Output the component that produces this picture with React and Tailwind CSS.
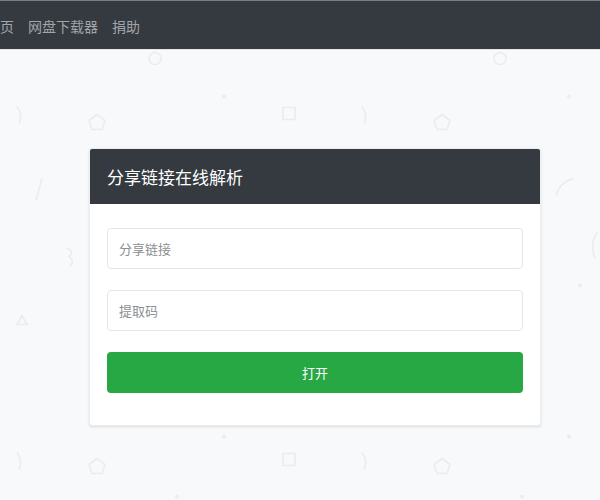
import React from 'react';

const font = { fontFamily: '"Noto Sans CJK SC", "Liberation Sans", sans-serif' };

// faint background pattern
const Pattern = () => (
  <svg className="absolute inset-0 h-full w-full" width="600" height="500" viewBox="0 0 600 500" fill="none" stroke="#eaecee" strokeWidth="1.6">
    {[0, 345].map((dx) => (
      <g key={dx} transform={`translate(${dx} 0)`}>
        <circle cx="155" cy="58" r="6" />
        <path d="M97 114 l8 6 -3 9 h-10 l-3 -9 z" />
        <rect x="283" y="107" width="12" height="12" />
        <path d="M17 106 q6 8 2 17" />
        <circle cx="224" cy="96" r="1.2" fill="#eaecee" />
        <circle cx="177" cy="153" r="1.2" fill="#eaecee" />
        <path d="M97 458 l8 6 -3 9 h-10 l-3 -9 z" />
        <rect x="283" y="453" width="12" height="12" />
        <path d="M17 452 q6 8 2 17" />
        <circle cx="224" cy="436" r="1.2" fill="#eaecee" />
        <circle cx="177" cy="496" r="1.2" fill="#eaecee" />
      </g>
    ))}
    <path d="M42 178 l-6 22" />
    <path d="M67 248 q8 3 2 8 q6 4 1 10" />
    <path d="M22 315 l5 9 h-10 z" />
    <path d="M556 195 q4 -14 18 -17" />
    <path d="M598 232 q-9 8 -3 26" />
    <circle cx="580" cy="285" r="1.2" fill="#eaecee" />
  </svg>
);

export default function App() {
  return (
    <div className="relative min-h-[500px] w-[600px] overflow-hidden bg-[#f8f9fa]" style={font}>
      <Pattern />
      <nav className="relative h-[50px] border-t border-[#7a7e84] border-b border-b-[#e4e6e8] bg-[#343a40] flex items-center overflow-hidden">
        <ul className="flex items-center gap-[14px] -ml-[14px] pt-[2px] text-[14px] text-[#a2a5a9]">
          <li>首页</li>
          <li>网盘下载器</li>
          <li>捐助</li>
        </ul>
      </nav>

      <div className="relative flex pl-[89px] pt-[98px] pb-[75px]">
        <div className="w-[452px] bg-white border border-[#eceeef] rounded-[3px] shadow-sm overflow-hidden">
          <div className="h-[55px] bg-[#343a40] flex items-center px-[17px]">
            <h1 className="text-[17px] text-white">分享链接在线解析</h1>
          </div>
          <form className="px-[17px] pt-[24px] pb-[32px] flex flex-col gap-[21px]">
            <input
              placeholder="分享链接"
              className="h-[41px] w-full rounded-[4px] border border-[#e3e6e8] px-[11px] text-[13px] text-[#495057] placeholder:text-[#8a8f94] outline-none"
              style={font}
            />
            <input
              placeholder="提取码"
              className="h-[41px] w-full rounded-[4px] border border-[#e3e6e8] px-[11px] text-[13px] text-[#495057] placeholder:text-[#8a8f94] outline-none"
              style={font}
            />
            <button
              type="button"
              className="h-[41px] w-full rounded-[4px] bg-[#28a745] text-[13px] text-white"
              style={font}
            >
              打开
            </button>
          </form>
        </div>
      </div>
    </div>
  );
}
